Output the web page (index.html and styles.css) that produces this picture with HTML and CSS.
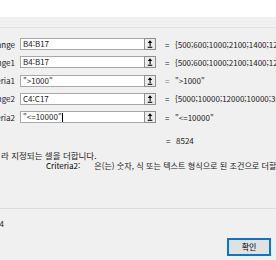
FILE: index.html
```html
<!DOCTYPE html>
<html lang="ko">
<head>
<meta charset="utf-8">
<link rel="stylesheet" href="styles.css">
</head>
<body>
<div class="dialog">
  <div class="top"></div>
  <div class="band"></div>
  <div class="rows">
    <div class="row">
      <div class="label"><span>Sum_range</span></div>
      <div class="input">B4:B17</div>
      <div class="btn"><svg width="11" height="10" viewBox="0 0 11 10"><path d="M3 4 L5.5 1 L8 4 Z" fill="#000"/><rect x="5" y="3.5" width="1.2" height="4" fill="#000"/><rect x="3" y="8" width="5" height="1.2" fill="#000"/></svg></div>
      <div class="eq">=</div>
      <div class="value">{500;600;1000;2100;1400;1200;1000;800;700}</div>
    </div>
    <div class="row">
      <div class="label"><span>Criteria_range1</span></div>
      <div class="input">B4:B17</div>
      <div class="btn"><svg width="11" height="10" viewBox="0 0 11 10"><path d="M3 4 L5.5 1 L8 4 Z" fill="#000"/><rect x="5" y="3.5" width="1.2" height="4" fill="#000"/><rect x="3" y="8" width="5" height="1.2" fill="#000"/></svg></div>
      <div class="eq">=</div>
      <div class="value">{500;600;1000;2100;1400;1200;1000;800;700}</div>
    </div>
    <div class="row">
      <div class="label"><span>Criteria1</span></div>
      <div class="input">"&gt;1000"</div>
      <div class="btn"><svg width="11" height="10" viewBox="0 0 11 10"><path d="M3 4 L5.5 1 L8 4 Z" fill="#000"/><rect x="5" y="3.5" width="1.2" height="4" fill="#000"/><rect x="3" y="8" width="5" height="1.2" fill="#000"/></svg></div>
      <div class="eq light">=</div>
      <div class="value">"&gt;1000"</div>
    </div>
    <div class="row">
      <div class="label"><span>Criteria_range2</span></div>
      <div class="input">C4:C17</div>
      <div class="btn"><svg width="11" height="10" viewBox="0 0 11 10"><path d="M3 4 L5.5 1 L8 4 Z" fill="#000"/><rect x="5" y="3.5" width="1.2" height="4" fill="#000"/><rect x="3" y="8" width="5" height="1.2" fill="#000"/></svg></div>
      <div class="eq">=</div>
      <div class="value">{5000;10000;12000;10000;3000;8000;9000}</div>
    </div>
    <div class="row">
      <div class="label"><span>Criteria2</span></div>
      <div class="input">"&lt;=10000"<span class="caret"></span></div>
      <div class="btn"><svg width="11" height="10" viewBox="0 0 11 10"><path d="M3 4 L5.5 1 L8 4 Z" fill="#000"/><rect x="5" y="3.5" width="1.2" height="4" fill="#000"/><rect x="3" y="8" width="5" height="1.2" fill="#000"/></svg></div>
      <div class="eq">=</div>
      <div class="value">"&lt;=10000"</div>
    </div>
  </div>
  <div class="result"><span class="eq">=</span><span>8524</span></div>
  <div class="desc">라 지정되는 셀을 더합니다.</div>
  <div class="arg"><span class="argname">Criteria2:</span><span class="argtext">은(는) 숫자, 식 또는 텍스트 형식으로 된 조건으로 더할 셀을 정의합니다.</span></div>
  <div class="sep"></div>
  <div class="formula"><span>수식 결과 = 8524</span></div>
  <div class="footer"><button class="ok">확인</button></div>
</div>
</body>
</html>
```
FILE: styles.css
```css
html, body {
  margin: 0;
  padding: 0;
  background: #f0f0f0;
  overflow: hidden;
}
body {
  width: 276px;
  height: 260px;
  font-family: "Noto Sans CJK KR", "Noto Sans", sans-serif;
  font-size: 8px;
  color: #1a1a1a;
}
.dialog {
  display: flex;
  flex-direction: column;
  width: 276px;
  height: 260px;
  overflow: hidden;
}
.top {
  height: 17px;
  background: #ffffff;
}
.band {
  height: 10px;
  background: #f0f0f0;
  border-bottom: 1px solid #e0e0e0;
}
.rows {
  display: flex;
  flex-direction: column;
  gap: 6.3px;
  padding-top: 10px;
}
.row {
  display: flex;
  align-items: center;
  height: 12px;
  white-space: nowrap;
}
.label {
  width: 15px;
  margin-right: 5px;
  display: flex;
  justify-content: flex-end;
  white-space: nowrap;
  flex: none;
}
.input {
  flex: none;
  width: 124px;
  height: 12px;
  box-sizing: border-box;
  border: 1px solid #a9a9a9;
  border-right: none;
  background: #ffffff;
  padding-left: 2px;
  line-height: 10px;
  display: flex;
  align-items: center;
}
.caret {
  display: inline-block;
  width: 1px;
  height: 9px;
  background: #000;
  margin-left: 0.5px;
}
.btn {
  flex: none;
  width: 12px;
  height: 12px;
  box-sizing: border-box;
  border: 1px solid #8f8f8f;
  background: #ececec;
  display: flex;
  align-items: center;
  justify-content: center;
}
.btn svg {
  display: block;
}
.eq {
  flex: none;
  margin-left: 9px;
  width: 10px;
}
.eq.light {
  color: #7a7a7a;
}
.value {
  white-space: nowrap;
}
.result {
  display: flex;
  height: 12px;
  line-height: 12px;
  margin-top: 12px;
  padding-left: 157px;
}
.desc {
  height: 10px;
  line-height: 10px;
  margin-top: 3px;
  padding-left: 1px;
  white-space: nowrap;
  font-size: 8.5px;
}
.arg {
  display: flex;
  height: 10px;
  line-height: 10px;
  margin-top: 1px;
  padding-left: 46px;
  white-space: nowrap;
}
.argname {
  flex: none;
  margin-right: 14px;
  color: #000;
}
.argtext {
  flex: none;
  font-size: 8.1px;
}
.sep {
  margin-top: 37px;
  height: 1px;
  background: #dcdcdc;
}
.formula {
  width: 4px;
  height: 10px;
  line-height: 10px;
  margin-top: 10px;
  display: flex;
  justify-content: flex-end;
  white-space: nowrap;
}
.footer {
  display: flex;
  padding-left: 227px;
  margin-top: 9px;
}
.ok {
  width: 44px;
  height: 18px;
  box-sizing: border-box;
  border: 2px solid #0078d7;
  background: #e1e1e1;
  font-family: "Noto Sans CJK KR", sans-serif;
  font-size: 8px;
  color: #000;
  padding: 0;
  line-height: 14px;
}
```
